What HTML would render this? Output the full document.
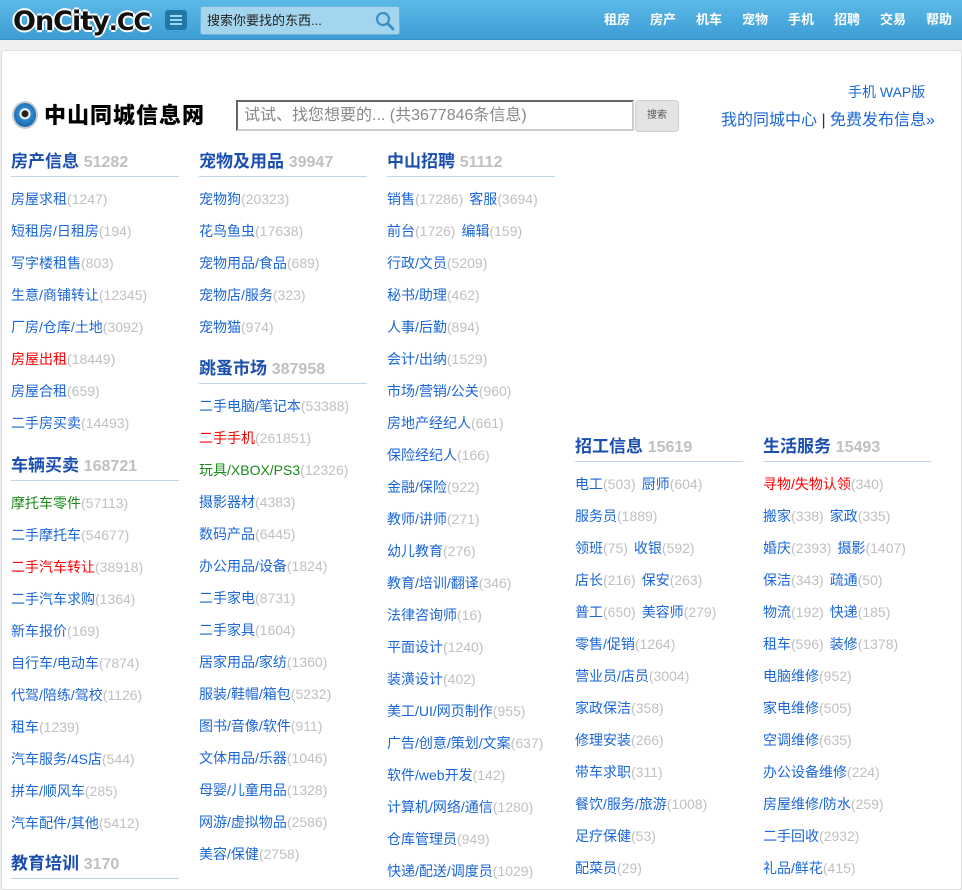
<!DOCTYPE html>
<html><head><meta charset="utf-8">
<style>
*{margin:0;padding:0;box-sizing:border-box}
body{width:962px;height:875px;overflow:hidden;background:#eef0f2;font-family:"Liberation Sans","Noto Sans CJK SC",sans-serif;position:relative}
#top{position:absolute;left:0;top:0;width:962px;height:40px;background:linear-gradient(#5cb9e8,#3d9dd4);border-bottom:1px solid #3a8fc4}
#logo{position:absolute;left:13px;top:6px;font:900 27px "DejaVu Sans",sans-serif;color:#111;letter-spacing:-1px;text-shadow:-2px 0 #fff,2px 0 #fff,0 -2px #fff,0 2px #fff}
#logo span{font-size:24px}
#menu{position:absolute;left:165px;top:10px;width:22px;height:20px;background:#1f78a8;border-radius:3px}
#menu i{position:absolute;left:5px;width:12px;height:2px;background:#9fd4ef}
#sbox{position:absolute;left:200px;top:6px;width:200px;height:29px;background:#a3d6ee;border:1px solid #6fb5dc;border-radius:3px;font-size:13px;color:#222;line-height:27px;padding-left:6px}
#nav{position:absolute;right:0;top:0;height:40px;line-height:40px;font-size:13px;font-weight:bold;color:#fff}
#nav a{display:inline-block;width:46px;text-align:center}
#panel{position:absolute;left:1px;top:50px;width:961px;height:840px;background:#fff;border:1px solid #ddd;border-radius:3px}
#site{position:absolute;left:12px;top:101px;font-size:22px;font-weight:900;color:#000;line-height:30px;letter-spacing:1px}
#site .ic{display:inline-block;width:26px;height:28px;border-radius:50%;background:radial-gradient(circle at 50% 45%,#222 3px,#fff 4px,#fff 5px,#2c8ad0 6px,#1e6fb0 12px);border:2px solid #ccc;vertical-align:-6px;margin-right:6px}
#inp{position:absolute;left:236px;top:100px;width:398px;height:31px;border:2px solid #666;border-right-color:#ccc;border-bottom-color:#ccc;font-size:16px;color:#888;line-height:27px;padding-left:6px;white-space:nowrap;overflow:hidden}
#btn{position:absolute;left:635px;top:100px;width:44px;height:32px;background:#e4e4e4;border:1px solid #ccc;border-radius:4px;font-size:10px;color:#555;text-align:center;line-height:30px}
#wap{position:absolute;left:848px;top:82px;font-size:14px;color:#1a66d6}
#my{position:absolute;left:721px;top:106px;font-size:16px;color:#1a66d6}
#my b{color:#333;font-weight:normal}
.sec{position:absolute;width:168px}
.sec h3{height:28px;border-bottom:1px solid #bcd6f2;font-size:17px;color:#1a4fb0;line-height:26px;margin-bottom:5px;white-space:nowrap}
.sec h3 span{color:#c0c0c0;font-size:16px}
.sec div{height:32px;line-height:34px;font-size:14px;color:#1a66d6;white-space:nowrap}
.sec div s{text-decoration:none;color:#c0c0c0}
.r{color:#f00!important}.g{color:#1a8a1a!important}
.sec div em{font-style:normal;margin-left:6px}
</style></head><body>
<div id="top">
<div id="logo">OnCity<span>.CC</span></div>
<div id="menu"><i style="top:5px"></i><i style="top:9px"></i><i style="top:13px"></i></div>
<div id="sbox">搜索你要找的东西...<svg style="position:absolute;right:4px;top:4px" width="20" height="20" viewBox="0 0 20 20"><circle cx="8" cy="8" r="6" fill="none" stroke="#3a8fc4" stroke-width="2.2"/><path d="M12.5 12.5L18 18" stroke="#3a8fc4" stroke-width="3" stroke-linecap="round"/></svg></div>
<div id="nav"><a>租房</a><a>房产</a><a>机车</a><a>宠物</a><a>手机</a><a>招聘</a><a>交易</a><a>帮助</a></div>
</div>
<div id="panel"></div>
<div id="site"><span class="ic"></span>中山同城信息网</div>
<div id="inp">试试、找您想要的... (共3677846条信息)</div>
<div id="btn">搜索</div>
<div id="wap">手机 WAP版</div>
<div id="my">我的同城中心 <b>|</b> 免费发布信息»</div>

<div class="sec" style="left:11px;top:149px"><h3>房产信息 <span>51282</span></h3>
<div>房屋求租<s>(1247)</s></div><div>短租房/日租房<s>(194)</s></div><div>写字楼租售<s>(803)</s></div><div>生意/商铺转让<s>(12345)</s></div><div>厂房/仓库/土地<s>(3092)</s></div><div class="r">房屋出租<s>(18449)</s></div><div>房屋合租<s>(659)</s></div><div>二手房买卖<s>(14493)</s></div></div>
<div class="sec" style="left:11px;top:453px"><h3>车辆买卖 <span>168721</span></h3>
<div class="g">摩托车零件<s>(57113)</s></div><div>二手摩托车<s>(54677)</s></div><div class="r">二手汽车转让<s>(38918)</s></div><div>二手汽车求购<s>(1364)</s></div><div>新车报价<s>(169)</s></div><div>自行车/电动车<s>(7874)</s></div><div>代驾/陪练/驾校<s>(1126)</s></div><div>租车<s>(1239)</s></div><div>汽车服务/4S店<s>(544)</s></div><div>拼车/顺风车<s>(285)</s></div><div>汽车配件/其他<s>(5412)</s></div></div>
<div class="sec" style="left:11px;top:851px"><h3>教育培训 <span>3170</span></h3></div>

<div class="sec" style="left:199px;top:149px"><h3>宠物及用品 <span>39947</span></h3>
<div>宠物狗<s>(20323)</s></div><div>花鸟鱼虫<s>(17638)</s></div><div>宠物用品/食品<s>(689)</s></div><div>宠物店/服务<s>(323)</s></div><div>宠物猫<s>(974)</s></div></div>
<div class="sec" style="left:199px;top:356px"><h3>跳蚤市场 <span>387958</span></h3>
<div>二手电脑/笔记本<s>(53388)</s></div><div class="r">二手手机<s>(261851)</s></div><div class="g">玩具/XBOX/PS3<s>(12326)</s></div><div>摄影器材<s>(4383)</s></div><div>数码产品<s>(6445)</s></div><div>办公用品/设备<s>(1824)</s></div><div>二手家电<s>(8731)</s></div><div>二手家具<s>(1604)</s></div><div>居家用品/家纺<s>(1360)</s></div><div>服装/鞋帽/箱包<s>(5232)</s></div><div>图书/音像/软件<s>(911)</s></div><div>文体用品/乐器<s>(1046)</s></div><div>母婴/儿童用品<s>(1328)</s></div><div>网游/虚拟物品<s>(2586)</s></div><div>美容/保健<s>(2758)</s></div></div>

<div class="sec" style="left:387px;top:149px"><h3>中山招聘 <span>51112</span></h3>
<div>销售<s>(17286)</s><em>客服</em><s>(3694)</s></div><div>前台<s>(1726)</s><em>编辑</em><s>(159)</s></div><div>行政/文员<s>(5209)</s></div><div>秘书/助理<s>(462)</s></div><div>人事/后勤<s>(894)</s></div><div>会计/出纳<s>(1529)</s></div><div>市场/营销/公关<s>(960)</s></div><div>房地产经纪人<s>(661)</s></div><div>保险经纪人<s>(166)</s></div><div>金融/保险<s>(922)</s></div><div>教师/讲师<s>(271)</s></div><div>幼儿教育<s>(276)</s></div><div>教育/培训/翻译<s>(346)</s></div><div>法律咨询师<s>(16)</s></div><div>平面设计<s>(1240)</s></div><div>装潢设计<s>(402)</s></div><div>美工/UI/网页制作<s>(955)</s></div><div>广告/创意/策划/文案<s>(637)</s></div><div>软件/web开发<s>(142)</s></div><div>计算机/网络/通信<s>(1280)</s></div><div>仓库管理员<s>(949)</s></div><div>快递/配送/调度员<s>(1029)</s></div></div>

<div class="sec" style="left:575px;top:434px"><h3>招工信息 <span>15619</span></h3>
<div>电工<s>(503)</s><em>厨师</em><s>(604)</s></div><div>服务员<s>(1889)</s></div><div>领班<s>(75)</s><em>收银</em><s>(592)</s></div><div>店长<s>(216)</s><em>保安</em><s>(263)</s></div><div>普工<s>(650)</s><em>美容师</em><s>(279)</s></div><div>零售/促销<s>(1264)</s></div><div>营业员/店员<s>(3004)</s></div><div>家政保洁<s>(358)</s></div><div>修理安装<s>(266)</s></div><div>带车求职<s>(311)</s></div><div>餐饮/服务/旅游<s>(1008)</s></div><div>足疗保健<s>(53)</s></div><div>配菜员<s>(29)</s></div></div>

<div class="sec" style="left:763px;top:434px"><h3>生活服务 <span>15493</span></h3>
<div class="r">寻物/失物认领<s>(340)</s></div><div>搬家<s>(338)</s><em>家政</em><s>(335)</s></div><div>婚庆<s>(2393)</s><em>摄影</em><s>(1407)</s></div><div>保洁<s>(343)</s><em>疏通</em><s>(50)</s></div><div>物流<s>(192)</s><em>快递</em><s>(185)</s></div><div>租车<s>(596)</s><em>装修</em><s>(1378)</s></div><div>电脑维修<s>(952)</s></div><div>家电维修<s>(505)</s></div><div>空调维修<s>(635)</s></div><div>办公设备维修<s>(224)</s></div><div>房屋维修/防水<s>(259)</s></div><div>二手回收<s>(2932)</s></div><div>礼品/鲜花<s>(415)</s></div></div>
</body></html>
